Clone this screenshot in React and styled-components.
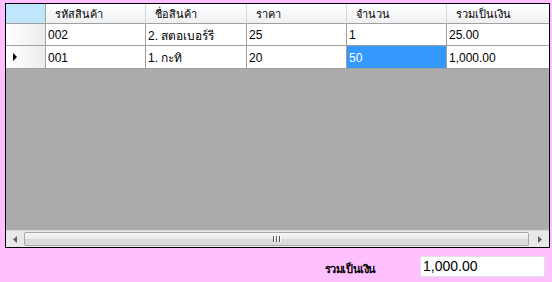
import React from "react";
import styled, { createGlobalStyle } from "styled-components";

const Global = createGlobalStyle`
  html, body { margin: 0; padding: 0; }
  body { background: #ffc0ff; font-family: "Liberation Sans", "Noto Sans", "DejaVu Sans", sans-serif; }
`;

const Page = styled.div`
  width: 552px;
  height: 282px;
  background: #ffc0ff;
  box-sizing: border-box;
  padding: 3px 2px 0 5px;
  display: flex;
  flex-direction: column;
`;

const GridBox = styled.div`
  width: 545px;
  height: 245px;
  box-sizing: border-box;
  border: 1px solid #000;
  background: #ababab;
  display: flex;
  flex-direction: column;
  overflow: hidden;
`;

const TableArea = styled.div`
  flex: 1;
  overflow: hidden;
  min-height: 0;
`;

const Row = styled.div`
  display: grid;
  grid-template-columns: 40px 100px 101px 100px 100px 120px;
  height: ${(p) => p.$h}px;
  width: max-content;
`;

const HeadCell = styled.div`
  box-sizing: border-box;
  border-right: 1px solid ${(p) => (p.$corner ? "#a0a0a0" : "#d5d5d5")};
  border-bottom: 1px solid #a0a0a0;
  background: ${(p) =>
    p.$corner ? "#bfe6fa" : "linear-gradient(#ffffff 0%, #f7f8fa 45%, #eef0f2 100%)"};
  font-size: 11px;
  color: #000;
  display: flex;
  align-items: center;
  padding-left: 9px;
  padding-top: 1px;
  white-space: nowrap;
`;

const RowHead = styled.div`
  box-sizing: border-box;
  border-right: 1px solid #a0a0a0;
  border-bottom: 1px solid #a0a0a0;
  background: linear-gradient(90deg, #ffffff 0%, #f4f4f4 60%, #ececec 100%);
  display: flex;
  align-items: center;
  padding-left: 7px;
`;

const Cell = styled.div`
  box-sizing: border-box;
  border-right: 1px solid #a0a0a0;
  border-bottom: 1px solid #a0a0a0;
  background: ${(p) => (p.$sel ? "#3399ff" : "#ffffff")};
  color: ${(p) => (p.$sel ? "#ffffff" : "#000000")};
  font-size: 12px;
  display: flex;
  align-items: center;
  padding-left: 2px;
  padding-top: 1px;
  white-space: nowrap;
  overflow: hidden;
`;

const Arrow = styled.span`
  width: 0;
  height: 0;
  border-top: 4px solid transparent;
  border-bottom: 4px solid transparent;
  border-left: 4px solid #000;
`;

const ScrollBar = styled.div`
  height: 17px;
  flex: none;
  background: #e8e8e8;
  border-top: 1px solid #d8d8d8;
  box-sizing: border-box;
  display: flex;
  align-items: center;
  padding: 0 1px;
  gap: 1px;
`;

const ScrollBtn = styled.div`
  width: 16px;
  height: 15px;
  display: flex;
  align-items: center;
  justify-content: center;
  flex: none;
`;

const Thumb = styled.div`
  flex: 1;
  height: 14px;
  box-sizing: border-box;
  border: 1px solid #a8a8a8;
  border-radius: 2px;
  background: linear-gradient(#f6f6f6 0%, #eaeaea 50%, #d9d9d9 51%, #dcdcdc 100%);
  display: flex;
  align-items: center;
  justify-content: center;
  margin-right: 2px;
`;

const Grip = styled.div`
  display: flex;
  gap: 2px;
  & > span {
    width: 1px;
    height: 6px;
    background: #555;
    box-shadow: 1px 0 0 #fff;
  }
`;

const Footer = styled.div`
  flex: 1;
  display: flex;
  align-items: center;
  justify-content: flex-end;
  padding-right: 5px;
  padding-top: 2px;
`;

const TotalLabel = styled.span`
  font-size: 11px;
  font-weight: bold;
  letter-spacing: -0.4px;
  margin-right: 44px;
  margin-top: 5px;
  color: #000;
`;

const TotalBox = styled.div`
  width: 125px;
  height: 21px;
  box-sizing: border-box;
  background: #fff;
  border: 1px solid #e0e0e0;
  font-size: 14px;
  display: flex;
  align-items: center;
  padding-left: 2px;
  color: #000;
`;

const headers = ["รหัสสินค้า", "ชื่อสินค้า", "ราคา", "จำนวน", "รวมเป็นเงิน"];
const rows = [
  { c: ["002", "2. สตอเบอร์รี", "25", "1", "25.00"], cur: false },
  { c: ["001", "1. กะทิ", "20", "50", "1,000.00"], cur: true, sel: 3 },
];

export default function App() {
  return (
    <>
      <Global />
      <Page>
        <GridBox>
          <TableArea>
            <Row $h={20}>
              <HeadCell $corner />
              {headers.map((h) => (
                <HeadCell key={h}>{h}</HeadCell>
              ))}
            </Row>
            {rows.map((r, i) => (
              <Row key={i} $h={i === 0 ? 22 : 23}>
                <RowHead>{r.cur && <Arrow />}</RowHead>
                {r.c.map((v, j) => (
                  <Cell key={j} $sel={r.sel === j}>
                    {v}
                  </Cell>
                ))}
              </Row>
            ))}
          </TableArea>
          <ScrollBar>
            <ScrollBtn>
              <svg width="4" height="7" viewBox="0 0 4 7">
                <path d="M4 0 L0 3.5 L4 7 Z" fill="#606060" />
              </svg>
            </ScrollBtn>
            <Thumb>
              <Grip>
                <span />
                <span />
                <span />
              </Grip>
            </Thumb>
            <ScrollBtn>
              <svg width="4" height="7" viewBox="0 0 4 7">
                <path d="M0 0 L4 3.5 L0 7 Z" fill="#606060" />
              </svg>
            </ScrollBtn>
          </ScrollBar>
        </GridBox>
        <Footer>
          <TotalLabel>รวมเป็นเงิน</TotalLabel>
          <TotalBox>1,000.00</TotalBox>
        </Footer>
      </Page>
    </>
  );
}
